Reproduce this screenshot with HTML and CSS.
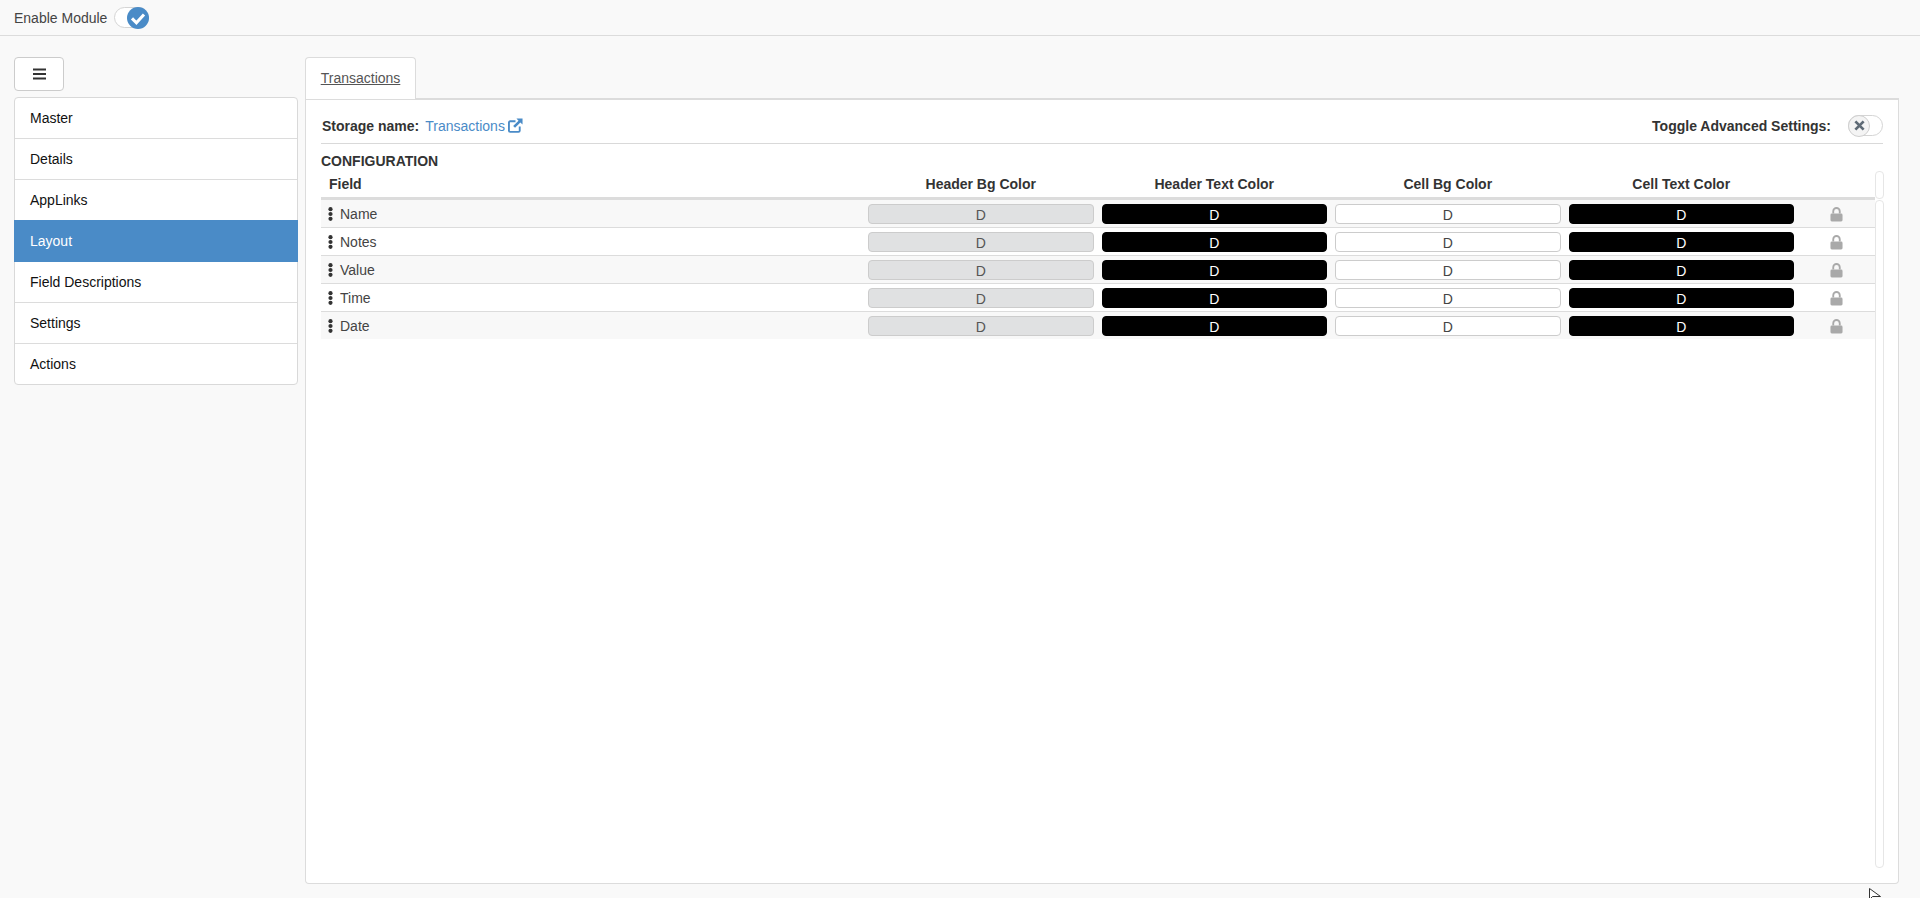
FILE: index.html
```html
<!DOCTYPE html>
<html lang="en">
<head>
<meta charset="utf-8">
<title>Layout</title>
<link rel="stylesheet" href="styles.css">
</head>
<body>
<header class="topbar">
  <span class="topbar-label">Enable Module</span>
  <span class="toggle toggle-on">
    <span class="knob knob-on">
      <svg viewBox="0 0 20 20" width="16" height="16"><path d="M2.500 10.500 8 16 17.500 5.500" fill="none" stroke="#fff" stroke-width="3.800"/></svg>
    </span>
  </span>
</header>
<main class="page">
  <aside class="sidebar">
    <button class="menu-btn" type="button">
      <svg viewBox="0 0 13 12" width="13" height="12"><path d="M0 1.500H13M0 6H13M0 10.500H13" stroke="#333" stroke-width="2" fill="none"/></svg>
    </button>
    <nav class="nav">
      <a class="nav-item">Master</a>
      <a class="nav-item">Details</a>
      <a class="nav-item">AppLinks</a>
      <a class="nav-item active">Layout</a>
      <a class="nav-item">Field Descriptions</a>
      <a class="nav-item">Settings</a>
      <a class="nav-item">Actions</a>
    </nav>
  </aside>
  <section class="content">
    <div class="tabs"><a class="tab">Transactions</a></div>
    <div class="panel">
      <div class="storage-row">
        <div class="storage">
          <strong>Storage name:</strong>
          <a class="storage-link">Transactions
            <svg class="ext" viewBox="0 0 16 16" width="15" height="15"><path d="M12.500 9v4.500a1.300 1.300 0 0 1-1.300 1.300H2.300a1.300 1.300 0 0 1-1.300-1.300V4.800a1.300 1.300 0 0 1 1.300-1.300H8" fill="none" stroke="#4a8bc7" stroke-width="2"/><path d="M9 0.500h6.500V7L13.200 4.700 7.500 10.500 5.500 8.500 11.200 2.800z" fill="#4a8bc7"/></svg>
          </a>
        </div>
        <div class="advanced">
          <strong>Toggle Advanced Settings:</strong>
          <span class="toggle toggle-off">
            <span class="knob knob-off">
              <svg viewBox="0 0 12 12" width="11" height="11"><path d="M1.500 1.500 10.500 10.500M10.500 1.500 1.500 10.500" stroke="#5f6b76" stroke-width="3" fill="none"/></svg>
            </span>
          </span>
        </div>
      </div>
      <h2 class="config-title">CONFIGURATION</h2>
      <div class="table-wrap">
        <div class="table">
          <div class="row head">
            <div class="c-field">Field</div>
            <div class="c-color">Header Bg Color</div>
            <div class="c-color">Header Text Color</div>
            <div class="c-color">Cell Bg Color</div>
            <div class="c-color">Cell Text Color</div>
            <div class="c-lock"></div>
          </div>
          <div class="row odd">
            <div class="c-field"><svg class="dots" viewBox="0 0 5 14" width="5" height="14"><circle cx="2.500" cy="2.200" r="2.100"/><circle cx="2.500" cy="7" r="2.100"/><circle cx="2.500" cy="11.800" r="2.100"/></svg>Name</div>
            <div class="c-color"><span class="sw sw-grey">D</span></div>
            <div class="c-color"><span class="sw sw-black">D</span></div>
            <div class="c-color"><span class="sw sw-white">D</span></div>
            <div class="c-color"><span class="sw sw-black">D</span></div>
            <div class="c-lock"><svg viewBox="0 0 14 16" width="13" height="15"><path d="M3.500 7V4.500a3.500 3.500 0 0 1 7 0V7" fill="none" stroke="#a9a9a9" stroke-width="2"/><rect x="0.500" y="7" width="13" height="8.500" rx="1.500" fill="#a9a9a9"/></svg></div>
          </div>
          <div class="row">
            <div class="c-field"><svg class="dots" viewBox="0 0 5 14" width="5" height="14"><circle cx="2.500" cy="2.200" r="2.100"/><circle cx="2.500" cy="7" r="2.100"/><circle cx="2.500" cy="11.800" r="2.100"/></svg>Notes</div>
            <div class="c-color"><span class="sw sw-grey">D</span></div>
            <div class="c-color"><span class="sw sw-black">D</span></div>
            <div class="c-color"><span class="sw sw-white">D</span></div>
            <div class="c-color"><span class="sw sw-black">D</span></div>
            <div class="c-lock"><svg viewBox="0 0 14 16" width="13" height="15"><path d="M3.500 7V4.500a3.500 3.500 0 0 1 7 0V7" fill="none" stroke="#a9a9a9" stroke-width="2"/><rect x="0.500" y="7" width="13" height="8.500" rx="1.500" fill="#a9a9a9"/></svg></div>
          </div>
          <div class="row odd">
            <div class="c-field"><svg class="dots" viewBox="0 0 5 14" width="5" height="14"><circle cx="2.500" cy="2.200" r="2.100"/><circle cx="2.500" cy="7" r="2.100"/><circle cx="2.500" cy="11.800" r="2.100"/></svg>Value</div>
            <div class="c-color"><span class="sw sw-grey">D</span></div>
            <div class="c-color"><span class="sw sw-black">D</span></div>
            <div class="c-color"><span class="sw sw-white">D</span></div>
            <div class="c-color"><span class="sw sw-black">D</span></div>
            <div class="c-lock"><svg viewBox="0 0 14 16" width="13" height="15"><path d="M3.500 7V4.500a3.500 3.500 0 0 1 7 0V7" fill="none" stroke="#a9a9a9" stroke-width="2"/><rect x="0.500" y="7" width="13" height="8.500" rx="1.500" fill="#a9a9a9"/></svg></div>
          </div>
          <div class="row">
            <div class="c-field"><svg class="dots" viewBox="0 0 5 14" width="5" height="14"><circle cx="2.500" cy="2.200" r="2.100"/><circle cx="2.500" cy="7" r="2.100"/><circle cx="2.500" cy="11.800" r="2.100"/></svg>Time</div>
            <div class="c-color"><span class="sw sw-grey">D</span></div>
            <div class="c-color"><span class="sw sw-black">D</span></div>
            <div class="c-color"><span class="sw sw-white">D</span></div>
            <div class="c-color"><span class="sw sw-black">D</span></div>
            <div class="c-lock"><svg viewBox="0 0 14 16" width="13" height="15"><path d="M3.500 7V4.500a3.500 3.500 0 0 1 7 0V7" fill="none" stroke="#a9a9a9" stroke-width="2"/><rect x="0.500" y="7" width="13" height="8.500" rx="1.500" fill="#a9a9a9"/></svg></div>
          </div>
          <div class="row odd last">
            <div class="c-field"><svg class="dots" viewBox="0 0 5 14" width="5" height="14"><circle cx="2.500" cy="2.200" r="2.100"/><circle cx="2.500" cy="7" r="2.100"/><circle cx="2.500" cy="11.800" r="2.100"/></svg>Date</div>
            <div class="c-color"><span class="sw sw-grey">D</span></div>
            <div class="c-color"><span class="sw sw-black">D</span></div>
            <div class="c-color"><span class="sw sw-white">D</span></div>
            <div class="c-color"><span class="sw sw-black">D</span></div>
            <div class="c-lock"><svg viewBox="0 0 14 16" width="13" height="15"><path d="M3.500 7V4.500a3.500 3.500 0 0 1 7 0V7" fill="none" stroke="#a9a9a9" stroke-width="2"/><rect x="0.500" y="7" width="13" height="8.500" rx="1.500" fill="#a9a9a9"/></svg></div>
          </div>
        </div>
        <div class="scrollbar"><span class="scroll-cap"></span><span class="scroll-thumb"></span></div>
      </div>
    </div>
  </section>
</main>
<svg class="cursor" viewBox="0 0 12 12" width="12" height="12"><path d="M0.500 0.500V11.500L3.500 8.500H11.500Z" fill="#fff" stroke="#333" stroke-width="1"/></svg>
</body>
</html>
```

FILE: styles.css
```css
* { box-sizing: border-box; }
html, body { margin: 0; height: 898px; overflow: hidden; }
body {
  position: relative;
  background: #f9f9f9;
  color: #333;
  font-family: "Liberation Sans", Arial, sans-serif;
  font-size: 14px;
}
.topbar {
  height: 36px;
  display: flex;
  align-items: center;
  gap: 7px;
  padding: 1px 14px 0;
  border-bottom: 1px solid #dcdcdc;
}
.topbar-label { color: #444; }
.toggle {
  display: inline-flex;
  width: 35px;
  height: 21px;
  border: 1px solid #d5d5d5;
  border-radius: 11px;
  background: #fff;
  align-items: center;
}
.toggle-on { justify-content: flex-end; margin-top: -1px; }
.knob {
  width: 22px;
  height: 22px;
  border-radius: 50%;
  display: flex;
  align-items: center;
  justify-content: center;
  flex: none;
}
.knob-on { background: #4a8bc7; margin-right: -1px; }
.knob-off { background: #f4f4f4; border: 1px solid #cfcfcf; margin-left: -1px; }
.page {
  display: flex;
  padding: 21px 0 0 14px;
  gap: 7px;
}
.sidebar { width: 284px; flex: none; }
.menu-btn {
  display: flex;
  align-items: center;
  justify-content: center;
  width: 50px;
  height: 34px;
  padding: 0;
  background: #fff;
  border: 1px solid #ccc;
  border-radius: 4px;
  margin-bottom: 6px;
}
.nav {
  background: #fff;
  border: 1px solid #d9d9d9;
  border-radius: 4px;
  display: flex;
  flex-direction: column;
}
.nav-item {
  height: 41px;
  padding: 0 15px;
  display: flex;
  align-items: center;
  color: #111;
  border-bottom: 1px solid #dcdcdc;
}
.nav-item:last-child { border-bottom: 0; height: 40px; }
.nav-item.active {
  background: #4a8bc7;
  color: #fff;
  margin: -1px -1px 0;
  padding: 0 16px;
  height: 42px;
  border-bottom: 0;
}
.content { width: 1594px; flex: none; }
.tabs { display: flex; height: 41px; }
.tab {
  width: 111px;
  height: 42px;
  padding-bottom: 1px;
  background: #fff;
  border: 1px solid #dcdcdc;
  border-bottom: 0;
  border-radius: 4px 4px 0 0;
  display: flex;
  align-items: center;
  justify-content: center;
  color: #555;
  text-decoration: underline;
  position: relative;
  z-index: 1;
}
.panel {
  height: 786px;
  background: #fff;
  border: 1px solid #dcdcdc;
  border-top: 2px solid #dcdcdc;
  border-radius: 0 0 4px 4px;
  padding: 0 15px;
}
.storage-row {
  height: 44px;
  padding: 8px 0 0 1px;
  display: flex;
  align-items: center;
  justify-content: space-between;
  border-bottom: 1px solid #d9d9d9;
}
.storage, .advanced { display: flex; align-items: center; }
.storage strong, .advanced strong { color: #333; }
.storage-link { color: #4a8bc7; margin-left: 6px; display: inline-flex; align-items: center; gap: 3px; }
.advanced .toggle { margin-left: 17px; }
.config-title {
  margin: 0;
  padding-top: 9px;
  height: 27px;
  font-size: 14px;
  line-height: 16px;
  color: #333;
}
.table-wrap { display: flex; height: 697px; }
.table { width: 1554px; flex: none; }
.scrollbar { width: 9px; flex: none; display: flex; flex-direction: column; gap: 1px; }
.scroll-cap {
  height: 28px;
  border: 1px solid #e6e6e6;
  border-radius: 4px;
}
.scroll-thumb {
  flex: 1;
  border: 1px solid #e6e6e6;
  border-radius: 4px;
}
.row {
  display: grid;
  grid-template-columns: 543px repeat(4, 233.5px) 1fr;
  align-items: center;
  height: 28px;
  border-bottom: 1px solid #dcdcdc;
  color: #444;
}
.row.last { border-bottom: 0; height: 27px; }
.row.odd { background: #f8f8f8; }
.row.head {
  height: 29px;
  border-bottom: 3px solid #dcdcdc;
  font-weight: bold;
  color: #333;
}
.head .c-color { display: block; text-align: center; }
.head .c-field { padding-left: 8px; }
.c-field { padding-left: 7px; display: flex; align-items: center; gap: 7px; }
.c-color { padding: 0 4px; display: flex; justify-content: center; }
.dots { fill: #333; flex: none; }
.c-lock { display: flex; justify-content: center; align-items: center; padding-top: 2px; }
.sw {
  display: block;
  width: 100%;
  height: 20px;
  border-radius: 4px;
  text-align: center;
  line-height: 20px;
  border: 1px solid #ccc;
}
.sw-grey { background: #e0e1e2; color: #555; }
.sw-black { background: #000; color: #fff; border-color: #000; }
.sw-white { background: #fff; color: #444; }
.cursor { position: absolute; left: 1869px; top: 888px; }
```
